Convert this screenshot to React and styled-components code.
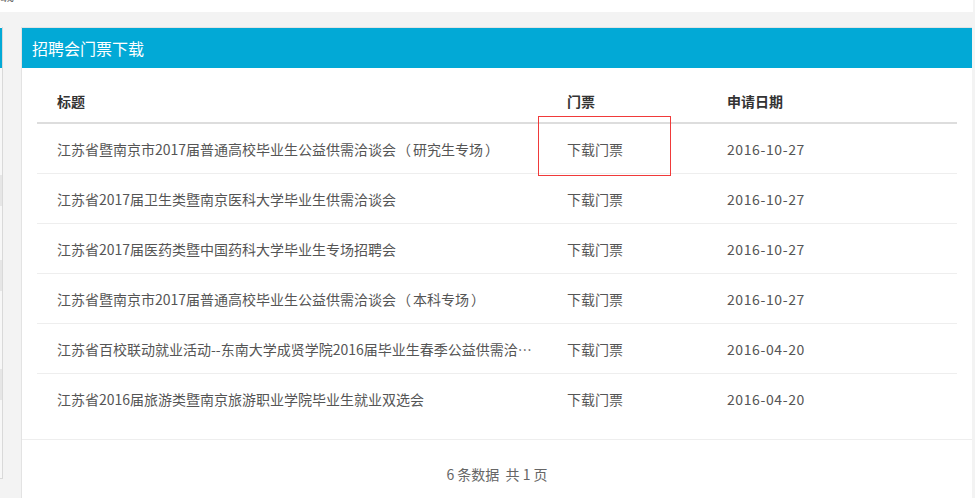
import React from "react";
import styled, { createGlobalStyle } from "styled-components";

const Global = createGlobalStyle`
  html, body { margin: 0; padding: 0; }
  body {
    background: #f3f3f3;
    font-family: "Noto Sans CJK SC", "Noto Sans", sans-serif;
    font-size: 14px;
    color: #555;
    overflow: hidden;
  }
`;

const Page = styled.div`
  width: 975px;
  height: 498px;
  overflow: hidden;
`;

const TopBar = styled.div`
  width: 973px;
  height: 12px;
  background: #fff;
  overflow: hidden;
`;

const TopText = styled.div`
  font-size: 14px;
  line-height: 20px;
  color: #666;
  margin-top: -16px;
  margin-left: -14px;
`;

const Main = styled.div`
  display: flex;
  align-items: flex-start;
  padding-top: 15px;
`;

const Sidebar = styled.div`
  flex: none;
  width: 2px;
  height: 451px;
  border-right: 1px solid #d9d9d9;
  border-bottom: 1px solid #d9d9d9;
  background: #f7f7f7;
  margin-right: 18px;
  display: flex;
  flex-direction: column;
`;

const SideHead = styled.div`
  height: 40px;
  margin-top: 1px;
  background: #02a9d6;
`;

const SideItem = styled.div`
  height: ${(p) => p.$h}px;
  background: ${(p) => (p.$shade ? "#e6e6e6" : "#f7f7f7")};
`;

const Panel = styled.div`
  flex: none;
  width: 950px;
  height: 480px;
  background: #fff;
  border-top: 1px solid #e3e3e3;
  border-left: 1px solid #e3e3e3;
  display: flex;
  flex-direction: column;
`;

const PanelHead = styled.div`
  height: 40px;
  background: #02a9d6;
  color: #fff;
  font-size: 16px;
  line-height: 40px;
  padding-left: 10px;
`;

const PanelBody = styled.div`
  padding: 12px 15px 16px;
`;

const Table = styled.table`
  width: 100%;
  table-layout: fixed;
  border-collapse: collapse;
`;

const Th = styled.th`
  box-sizing: border-box;
  width: ${(p) => (p.$w ? `${p.$w}px` : "auto")};
  height: 43px;
  padding: 0 20px;
  text-align: left;
  font-weight: bold;
  color: #333;
  font-size: 14px;
  line-height: 20px;
  border-bottom: 2px solid #ddd;
`;

const Tr = styled.tr`
  & + & td {
    border-top: 1px solid #eee;
  }
`;

const Td = styled.td`
  height: 49px;
  padding: 0 ${(p) => (p.$clip ? "8px" : "20px")} 0 20px;
  line-height: 20px;
  color: #555;
  white-space: nowrap;
  overflow: ${(p) => (p.$clip ? "hidden" : "visible")};
  text-overflow: ellipsis;
  letter-spacing: ${(p) => (p.$date ? "0.6px" : "0")};
  position: relative;
`;

const Paren = styled.span`
  display: inline-block;
  box-sizing: border-box;
  width: 17px;
  padding-left: ${(p) => (p.$open ? "1px" : "2px")};
  text-align: left;
`;

const Marker = styled.span`
  position: absolute;
  left: -9px;
  top: -8px;
  width: 131px;
  height: 58px;
  border: 1px solid #f03a3a;
  pointer-events: none;
`;

const Footer = styled.div`
  border-top: 1px solid #eee;
  padding-top: 24px;
  text-align: center;
  line-height: 20px;
  color: #666;
`;

const Title = ({ text }) => {
  const m = text.match(/^(.*)（(.*)）$/);
  if (!m) return text;
  return (
    <>
      {m[1]}
      <Paren $open>（</Paren>
      {m[2]}
      <Paren>）</Paren>
    </>
  );
};

const rows = [
  ["江苏省暨南京市2017届普通高校毕业生公益供需洽谈会（研究生专场）", "2016-10-27"],
  ["江苏省2017届卫生类暨南京医科大学毕业生供需洽谈会", "2016-10-27"],
  ["江苏省2017届医药类暨中国药科大学毕业生专场招聘会", "2016-10-27"],
  ["江苏省暨南京市2017届普通高校毕业生公益供需洽谈会（本科专场）", "2016-10-27"],
  ["江苏省百校联动就业活动--东南大学成贤学院2016届毕业生春季公益供需洽谈会", "2016-04-20"],
  ["江苏省2016届旅游类暨南京旅游职业学院毕业生就业双选会", "2016-04-20"],
];

export default function App() {
  return (
    <Page>
      <Global />
      <TopBar>
        <TopText>下载</TopText>
      </TopBar>
      <Main>
        <Sidebar>
          <SideHead />
          <SideItem $h={107} />
          <SideItem $h={31} $shade />
          <SideItem $h={54} />
          <SideItem $h={31} $shade />
          <SideItem $h={78} />
          <SideItem $h={31} $shade />
        </Sidebar>
        <Panel>
          <PanelHead>招聘会门票下载</PanelHead>
          <PanelBody>
            <Table>
              <thead>
                <tr>
                  <Th $w={510}>标题</Th>
                  <Th $w={160}>门票</Th>
                  <Th>申请日期</Th>
                </tr>
              </thead>
              <tbody>
                {rows.map(([title, date], i) => (
                  <Tr key={i}>
                    <Td $clip>
                      <Title text={title} />
                    </Td>
                    <Td>
                      下载门票
                      {i === 0 && <Marker />}
                    </Td>
                    <Td $date>{date}</Td>
                  </Tr>
                ))}
              </tbody>
            </Table>
          </PanelBody>
          <Footer>6 条数据&nbsp;&nbsp;共 1 页</Footer>
        </Panel>
      </Main>
    </Page>
  );
}
